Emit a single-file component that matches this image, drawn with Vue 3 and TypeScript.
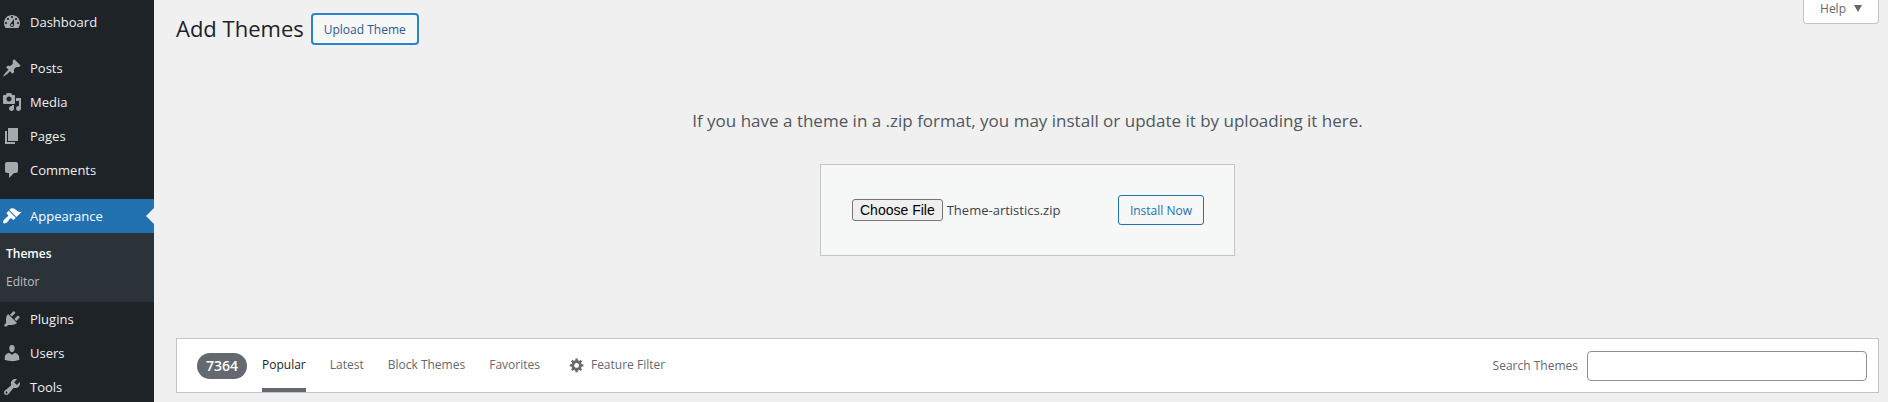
<script setup lang="ts">
import { onMounted, ref } from 'vue'

interface MenuItem {
  label: string
  icon: string
  current?: boolean
  spaced?: boolean
  children?: { label: string; current?: boolean }[]
}

const menu: MenuItem[] = [
  {
    label: 'Dashboard',
    icon: 'M3.76 16h12.48c1.1-1.37 1.76-3.11 1.76-5 0-4.42-3.58-8-8-8s-8 3.58-8 8c0 1.89.66 3.63 1.76 5zM10 4c.55 0 1 .45 1 1s-.45 1-1 1-1-.45-1-1 .45-1 1-1zM6 6c.55 0 1 .45 1 1s-.45 1-1 1-1-.45-1-1 .45-1 1-1zm8 0c.55 0 1 .45 1 1s-.45 1-1 1-1-.45-1-1 .45-1 1-1zm-5.37 5.55L12 7v6c0 1.1-.9 2-2 2s-2-.9-2-2c0-.57.24-1.08.63-1.45zM4 10c.55 0 1 .45 1 1s-.45 1-1 1-1-.45-1-1 .45-1 1-1zm12 0c.55 0 1 .45 1 1s-.45 1-1 1-1-.45-1-1 .45-1 1-1zm-5 3c0-.55-.45-1-1-1s-1 .45-1 1 .45 1 1 1 1-.45 1-1z',
  },
  {
    label: 'Posts',
    spaced: true,
    icon: 'M10.44 3.02l1.82-1.82 6.36 6.35-1.83 1.82c-1.05-.68-2.48-.57-3.41.36l-.75.75c-.92.93-1.04 2.35-.35 3.41l-1.83 1.82-2.41-2.41-2.8 2.79c-.42.42-3.38 2.71-3.8 2.29s1.86-3.39 2.28-3.81l2.79-2.79L4.1 9.36l1.83-1.82c1.05.69 2.48.57 3.4-.36l.75-.75c.93-.92 1.05-2.35.36-3.41z',
  },
  {
    label: 'Media',
    icon: 'M13 11V4c0-.55-.45-1-1-1h-1.67L9 1H5L3.67 3H2c-.55 0-1 .45-1 1v7c0 .55.45 1 1 1h10c.55 0 1-.45 1-1zM7 4.5c1.38 0 2.5 1.12 2.5 2.5S8.38 9.5 7 9.5 4.5 8.38 4.5 7 5.62 4.5 7 4.5zM14 6h5v10.5c0 1.38-1.12 2.5-2.5 2.5S14 17.88 14 16.5s1.12-2.5 2.5-2.5c.17 0 .34.02.5.05V9h-3V6zm-4 8.05V13h2v3.5c0 1.38-1.12 2.5-2.5 2.5S7 17.88 7 16.5 8.12 14 9.5 14c.17 0 .34.02.5.05z',
  },
  { label: 'Pages', icon: 'M6 15V2h10v13H6zm-1 1h8v2H3V5h2v11z' },
  {
    label: 'Comments',
    icon: 'M5 2h9c1.1 0 2 .9 2 2v7c0 1.1-.9 2-2 2h-2l-5 5v-5H5c-1.1 0-2-.9-2-2V4c0-1.1.9-2 2-2z',
  },
  {
    label: 'Appearance',
    spaced: true,
    current: true,
    icon: 'M14.48 11.06L7.41 3.99l1.5-1.5c.5-.56 2.3-.47 3.51.32 1.21.8 1.43 1.28 2.91 2.1 1.18.64 2.45 1.26 4.45.85zm-.71.71L6.7 4.7 4.93 6.47c-.39.39-.39 1.02 0 1.41l1.06 1.06c.39.39.39 1.03 0 1.42-.6.6-1.43 1.11-2.21 1.69-.35.26-.7.53-1.01.84C1.43 14.23.4 16.08 1.4 17.07c.99 1 2.84-.03 4.18-1.36.31-.31.58-.66.85-1.02.57-.78 1.08-1.61 1.69-2.21.39-.39 1.02-.39 1.41 0l1.06 1.06c.39.39 1.02.39 1.41 0z',
    children: [{ label: 'Themes', current: true }, { label: 'Editor' }],
  },
  {
    label: 'Plugins',
    icon: 'M13.11 4.36L9.87 7.6 8 5.73l3.24-3.24c.35-.34 1.05-.2 1.56.32.52.51.66 1.21.31 1.55zm-8 1.77l.91-1.12 9.01 9.01-1.19.84c-.71.71-2.63 1.16-3.82 1.16H6.14L4.9 17.26c-.59.59-1.54.59-2.12 0-.59-.58-.59-1.53 0-2.12l1.24-1.24v-3.88c0-1.13.4-3.19 1.09-3.89zm7.26 3.97l3.24-3.24c.34-.35 1.04-.21 1.55.31.52.51.66 1.21.31 1.55l-3.24 3.25z',
  },
  {
    label: 'Users',
    icon: 'M10 9.25c-2.27 0-2.73-3.44-2.73-3.44C7 4.02 7.82 2 9.97 2c2.16 0 2.98 2.02 2.71 3.81 0 0-.41 3.44-2.68 3.44zm0 2.57L12.72 10c2.39 0 4.52 2.33 4.52 4.53v2.49s-3.65 1.13-7.24 1.13c-3.65 0-7.24-1.13-7.24-1.13v-2.49c0-2.25 1.94-4.48 4.47-4.48z',
  },
  {
    label: 'Tools',
    icon: 'M16.68 9.77c-1.34 1.34-3.3 1.67-4.95.99l-5.41 6.52c-.99.99-2.59.99-3.58 0s-.99-2.59 0-3.57l6.52-5.42c-.68-1.65-.35-3.61.99-4.95 1.28-1.28 3.12-1.62 4.72-1.06l-2.89 2.89 2.82 2.82 2.86-2.87c.53 1.58.18 3.39-1.08 4.65zM3.81 16.21c.4.39 1.04.39 1.43 0 .4-.4.4-1.04 0-1.43-.39-.4-1.03-.4-1.43 0-.39.39-.39 1.03 0 1.43z',
  },
]

const tabs = ['Popular', 'Latest', 'Block Themes', 'Favorites']
const activeTab = ref('Popular')
const search = ref('')
const fileInput = ref<HTMLInputElement | null>(null)

onMounted(() => {
  const transfer = new DataTransfer()
  transfer.items.add(new File([''], 'Theme-artistics.zip', { type: 'application/zip' }))
  if (fileInput.value) fileInput.value.files = transfer.files
})
</script>

<template>
  <div class="admin">
    <nav class="sidebar" aria-label="Main menu">
      <ul class="menu">
        <li v-for="item in menu" :key="item.label" :class="{ spaced: item.spaced }">
          <a href="#" class="menu-link" :class="{ current: item.current }">
            <svg class="menu-icon" viewBox="0 0 20 20" aria-hidden="true"><path :d="item.icon" /></svg>
            <span>{{ item.label }}</span>
          </a>
          <ul v-if="item.children" class="submenu">
            <li v-for="child in item.children" :key="child.label">
              <a href="#" class="submenu-link" :class="{ current: child.current }">{{ child.label }}</a>
            </li>
          </ul>
        </li>
      </ul>
    </nav>

    <main class="content">
      <header class="page-head">
        <div class="heading">
          <h1>Add Themes</h1>
          <button type="button" class="button focused">Upload Theme</button>
        </div>
        <button type="button" class="help">
          Help
          <svg class="caret" viewBox="0 0 8 7" aria-hidden="true"><path d="M0 0h8L4 7z" /></svg>
        </button>
      </header>

      <section class="upload">
        <p id="upload-hint">If you have a theme in a .zip format, you may install or update it by uploading it here.</p>
        <form class="upload-form" @submit.prevent>
          <input ref="fileInput" type="file" accept=".zip" aria-labelledby="upload-hint" />
          <button type="submit" class="button">Install Now</button>
        </form>
      </section>

      <section class="filter-bar">
        <span class="count">7364</span>
        <div class="tabs">
          <button
            v-for="tab in tabs"
            :key="tab"
            type="button"
            class="tab"
            :class="{ active: tab === activeTab }"
            @click="activeTab = tab"
          >
            {{ tab }}
          </button>
        </div>
        <button type="button" class="feature">
          <svg class="gear" viewBox="0 0 20 20" aria-hidden="true">
            <path d="M18 12h-2.18c-.17.7-.44 1.35-.81 1.93l1.54 1.54-2.1 2.1-1.54-1.54c-.58.36-1.23.63-1.91.79V19H8v-2.18c-.68-.16-1.33-.43-1.91-.79l-1.54 1.54-2.12-2.12 1.54-1.54c-.36-.58-.63-1.23-.79-1.91H1V9.03h2.17c.16-.7.44-1.35.8-1.94L2.43 5.55l2.1-2.1 1.54 1.54c.58-.37 1.24-.64 1.93-.81V2h3v2.18c.68.16 1.33.43 1.91.79l1.54-1.54 2.12 2.12-1.54 1.54c.36.59.64 1.24.8 1.94H18V12zm-8.5 1.5c1.66 0 3-1.34 3-3s-1.34-3-3-3-3 1.34-3 3 1.34 3 3 3z" />
          </svg>
          Feature Filter
        </button>
        <div class="search">
          <label for="theme-search">Search Themes</label>
          <input id="theme-search" v-model="search" type="search" />
        </div>
      </section>
    </main>
  </div>
</template>

<style>
body {
  background: #f0f0f1;
}
</style>

<style scoped>
.admin {
  display: flex;
  min-height: 100vh;
  background: #f0f0f0;
  color: #3c434a;
  font-family: "Open Sans", "Noto Sans", sans-serif;
  font-size: 13px;
}

button,
input {
  box-sizing: border-box;
  font-family: inherit;
}

ul {
  margin: 0;
  padding: 0;
  list-style: none;
}

.sidebar {
  flex: none;
  width: 154px;
  height: 100vh;
  overflow: hidden;
  background: #1d2327;
}

.menu {
  padding-top: 5px;
}

.spaced {
  margin-top: 12px;
}

.menu-link {
  position: relative;
  display: flex;
  align-items: center;
  gap: 8px;
  height: 34px;
  padding-left: 2px;
  color: #f0f0f1;
  font-size: 13px;
  text-decoration: none;
}

.menu-icon {
  width: 20px;
  height: 20px;
  fill: #a7aaad;
}

.menu-link.current {
  background: #2271b1;
  color: #fff;
}

.menu-link.current .menu-icon {
  fill: #fff;
}

.menu-link.current::after {
  content: "";
  position: absolute;
  top: 9px;
  right: 0;
  border: 8px solid transparent;
  border-left-width: 0;
  border-right-color: #f0f0f0;
}

.submenu {
  padding: 7px 0 6px;
  background: #2c3338;
}

.submenu-link {
  display: block;
  padding-left: 6px;
  color: #bcbebf;
  font-size: 12px;
  line-height: 28px;
  text-decoration: none;
}

.submenu-link.current {
  color: #fff;
  font-weight: 600;
}

.content {
  flex: 1;
  min-width: 0;
  padding: 0 9px 0 22px;
}

.page-head {
  display: flex;
  justify-content: space-between;
  align-items: flex-start;
}

.heading {
  display: flex;
  align-items: center;
  gap: 7px;
  padding-top: 13px;
}

h1 {
  margin: 0;
  padding-bottom: 2px;
  color: #1d2327;
  font-size: 22px;
  font-weight: 400;
  line-height: 30px;
}

.button {
  height: 30px;
  padding: 0 11px;
  border: 1px solid #2271b1;
  border-radius: 3px;
  background: #f6f7f7;
  color: #2271b1;
  font-size: 12px;
}

.button.focused {
  height: 32px;
  border: 2px solid #2a84cc;
  border-radius: 4px;
  color: #2d5a8c;
}

.help {
  display: flex;
  align-items: center;
  gap: 8px;
  height: 24px;
  padding: 0 16px 6px;
  border: 1px solid #c3c4c7;
  border-top: 0;
  border-radius: 0 0 4px 4px;
  background: #fff;
  color: #646970;
  font-size: 12px;
}

.caret {
  width: 8px;
  height: 7px;
  fill: #646970;
}

.upload {
  padding: 62px 0 82px;
}

.upload p {
  margin: 0;
  color: #50575e;
  font-size: 17px;
  line-height: 28px;
  text-align: center;
}

.upload-form {
  display: flex;
  align-items: center;
  justify-content: space-between;
  box-sizing: border-box;
  max-width: 415px;
  margin: 29px auto 0;
  padding: 30px 30px 30px 31px;
  border: 1px solid #c3c4c7;
  background: #f6f7f7;
}

.upload-form input {
  flex: 1;
  min-width: 0;
  color: #3c434a;
  font-size: 13px;
}

.upload-form input::file-selector-button {
  height: 22px;
  padding: 0 7px;
  border: 1px solid #767676;
  border-radius: 3px;
  background: #efefef;
  color: #000;
  font-family: "Liberation Sans", Arial, sans-serif;
  font-size: 14px;
}

.filter-bar {
  display: flex;
  align-items: center;
  box-sizing: border-box;
  height: 55px;
  padding: 0 11px 0 20px;
  border: 1px solid #c3c4c7;
  background: #fff;
  color: #646970;
  font-size: 12px;
}

.count {
  padding: 0 9px;
  border-radius: 30px;
  background: #646970;
  color: #fff;
  font-size: 14px;
  font-weight: 600;
  line-height: 26px;
}

.tabs {
  display: flex;
  align-self: stretch;
  gap: 24px;
  margin-left: 15px;
}

.tab {
  padding: 2px 0 0;
  border: 0;
  border-bottom: 4px solid transparent;
  background: none;
  color: #646970;
  font-size: 12px;
}

.tab.active {
  border-bottom-color: #646970;
  color: #1d2327;
}

.feature {
  display: flex;
  align-items: center;
  gap: 6px;
  margin-left: 29px;
  padding: 0 0 2px;
  border: 0;
  background: none;
  color: #646970;
  font-size: 12px;
}

.gear {
  width: 16px;
  height: 16px;
  fill: #646970;
}

.search {
  display: flex;
  align-items: center;
  gap: 9px;
  margin-left: auto;
}

.search input {
  width: 280px;
  height: 30px;
  padding: 0 8px;
  border: 1px solid #8c8f94;
  border-radius: 4px;
  background: #fff;
  font-size: 13px;
}
</style>
